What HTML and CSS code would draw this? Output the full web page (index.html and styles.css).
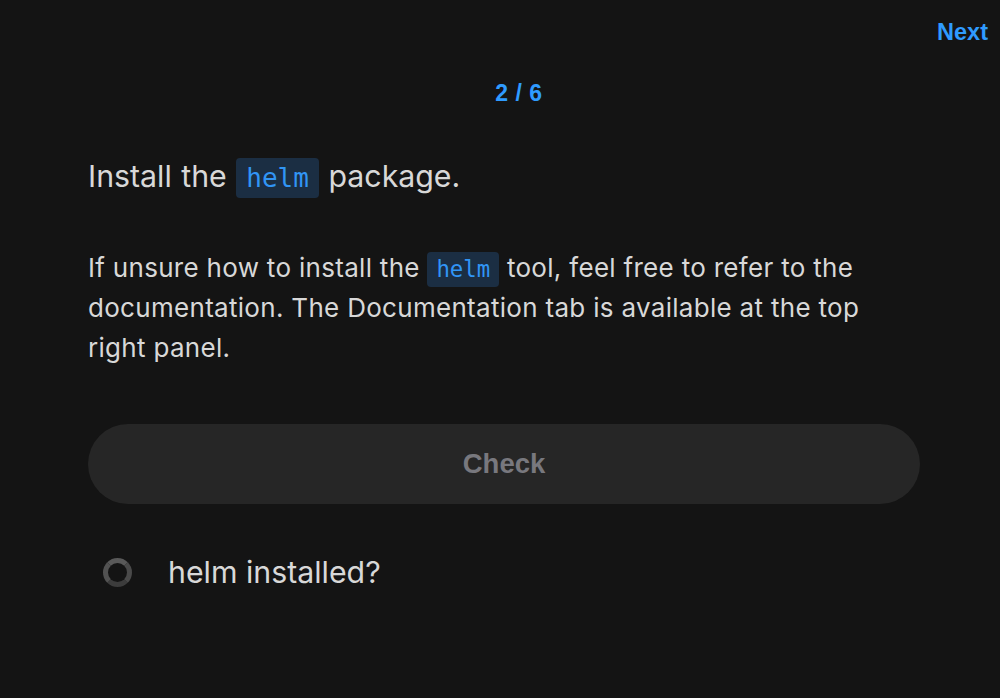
FILE: index.html
```html
<!DOCTYPE html>
<html>
<head>
<meta charset="utf-8">
<link rel="stylesheet" href="styles.css">
</head>
<body>
<div class="page">
  <div class="topbar"><a class="next">Next</a></div>
  <div class="step">2 / 6</div>
  <main class="content">
    <h1 class="title">Install the <code class="chip chip-lg">helm</code> package.</h1>
    <p class="desc">If unsure how to install the <code class="chip">helm</code> tool, feel free to refer to the documentation. The Documentation tab is available at the top right panel.</p>
    <button class="check">Check</button>
    <div class="task">
      <span class="ring"></span>
      <span class="task-label">helm installed?</span>
    </div>
  </main>
</div>
</body>
</html>
```
FILE: styles.css
```css
html, body {
  margin: 0;
  padding: 0;
  background: #141414;
}
body {
  width: 1000px;
  height: 698px;
  overflow: hidden;
  font-family: Inter, "Noto Sans", sans-serif;
  color: #d6d6d6;
}
.page {
  display: flex;
  flex-direction: column;
}
.topbar {
  display: flex;
  justify-content: flex-end;
  padding: 18px 12px 0 0;
  height: 28px;
}
.next {
  font-family: "Liberation Sans", Arial, sans-serif;
  font-weight: bold;
  font-size: 23.5px;
  color: #2f9bff;
  line-height: 28px;
}
.step {
  margin-top: 33px;
  text-align: center;
  padding-left: 38px;
  font-family: "Liberation Sans", Arial, sans-serif;
  font-weight: bold;
  font-size: 23px;
  line-height: 28px;
  color: #2f9bff;
  letter-spacing: 0.5px;
}
.content {
  padding: 0 80px 0 88px;
}
.title {
  margin: 47px 0 0 0;
  font-size: 30.3px;
  font-weight: 400;
  line-height: 44px;
  word-spacing: 1px;
  color: #d8d8d8;
}
.chip {
  display: inline-block;
  font-family: "DejaVu Sans Mono", monospace;
  background: #1b2e43;
  color: #3195f5;
  border-radius: 4px;
  font-size: 22.4px;
  line-height: 29px;
  padding: 3px 9px;
  letter-spacing: 0;
  word-spacing: 0;
}
.chip-lg {
  font-size: 26px;
  line-height: 30px;
  padding: 5px 10px;
}
.desc {
  margin: 50px 0 0 0;
  font-size: 26px;
  line-height: 40px;
  letter-spacing: 0.3px;
  color: #d8d8d8;
  max-width: 800px;
}
.check {
  display: block;
  width: 832px;
  height: 80px;
  margin-top: 56px;
  border: none;
  border-radius: 40px;
  background: #262626;
  color: #78787e;
  font-family: "Liberation Sans", Arial, sans-serif;
  font-weight: bold;
  font-size: 27.5px;
  padding: 0;
}
.task {
  display: flex;
  align-items: center;
  margin-top: 48px;
  padding-left: 15px;
}
.ring {
  width: 19px;
  height: 19px;
  border-radius: 50%;
  border: 5px solid #4a4a4a;
  border-top-color: #595959;
  border-left-color: #525252;
  border-bottom-color: #3c3c3c;
  flex: none;
}
.task-label {
  margin-left: 36px;
  font-size: 30.3px;
  line-height: 40px;
  color: #d8d8d8;
}
```
